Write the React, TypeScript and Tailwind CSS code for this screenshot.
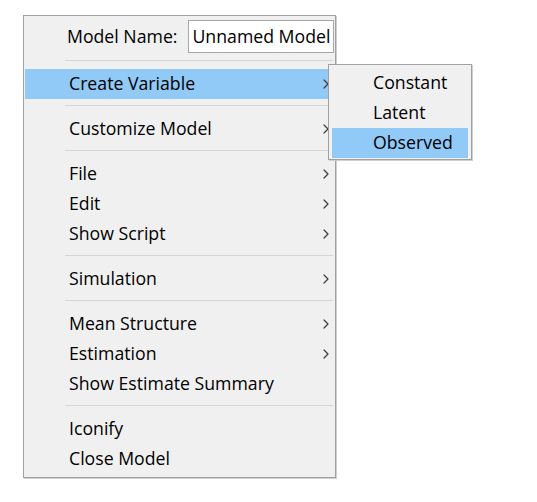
import React from 'react';

// ─────────────────────────────────────────────────────────────────────────────
// Chevron used by items that open a submenu
// ─────────────────────────────────────────────────────────────────────────────

const Chevron = () => (
  <svg width="6" height="10" viewBox="0 0 6 10" fill="none"
    stroke="#3c3c3c" strokeWidth="1.2" strokeLinecap="round" strokeLinejoin="round">
    <polyline points="1 1 5 5 1 9" />
  </svg>
);

const Separator = () => (
  <div className="pt-[6px] pb-[8px] pl-[41px] pr-[2px]">
    <div className="h-px bg-[#d5d5d5]" />
  </div>
);

type ItemProps = { label: string; sub?: boolean; active?: boolean };

const Item = ({ label, sub, active }: ItemProps) => (
  <div className={`mx-px h-[30px] flex items-center justify-between pl-[44px] pr-[5px] pb-px ${active ? 'bg-[#91c9f7]' : ''}`}>
    <span className="whitespace-nowrap">{label}</span>
    {sub && <Chevron />}
  </div>
);

const SubItem = ({ label, active }: ItemProps) => (
  <div className={`mx-[3px] h-[30px] flex items-center pl-[41px] pb-px ${active ? 'bg-[#91c9f7]' : ''}`}>
    {label}
  </div>
);

export default function App() {
  return (
    <div className="relative w-[537px] h-[502px] bg-white text-[17.7px] text-black"
      style={{ fontFamily: '"Open Sans", "Noto Sans", sans-serif' }}>

      {/* ── Menu principal ──────────────────────────────────────────────── */}
      <div className="absolute left-[23px] top-[15px] w-[313px] border border-[#a0a0a0] bg-[#f0f0f0] shadow-[1px_1px_0_#cfcfcf] pb-[3px]">
        <div className="flex items-center h-[37px] pt-[3px] pl-[43px] pr-[1px] gap-[11px]">
          <span className="whitespace-nowrap">Model Name:</span>
          <div className="flex-1 h-[33px] bg-white border border-[#a5a5a5] overflow-hidden whitespace-nowrap flex items-center pl-[3px]">
            Unnamed Model
          </div>
        </div>
        <div className="pt-[7px] pb-[8px] pl-[41px] pr-[2px]">
          <div className="h-px bg-[#d5d5d5]" />
        </div>
        <Item label="Create Variable" sub active />
        <Separator />
        <Item label="Customize Model" sub />
        <Separator />
        <Item label="File" sub />
        <Item label="Edit" sub />
        <Item label="Show Script" sub />
        <Separator />
        <Item label="Simulation" sub />
        <Separator />
        <Item label="Mean Structure" sub />
        <Item label="Estimation" sub />
        <Item label="Show Estimate Summary" />
        <Separator />
        <Item label="Iconify" />
        <Item label="Close Model" />
      </div>

      {/* ── Submenú Create Variable ─────────────────────────────────────── */}
      <div className="absolute left-[328px] top-[64px] w-[144px] border border-[#a0a0a0] bg-[#f0f0f0] shadow-[1px_1px_0_#cfcfcf] pt-[3px] pb-px">
        <SubItem label="Constant" />
        <SubItem label="Latent" />
        <SubItem label="Observed" active />
      </div>
    </div>
  );
}
